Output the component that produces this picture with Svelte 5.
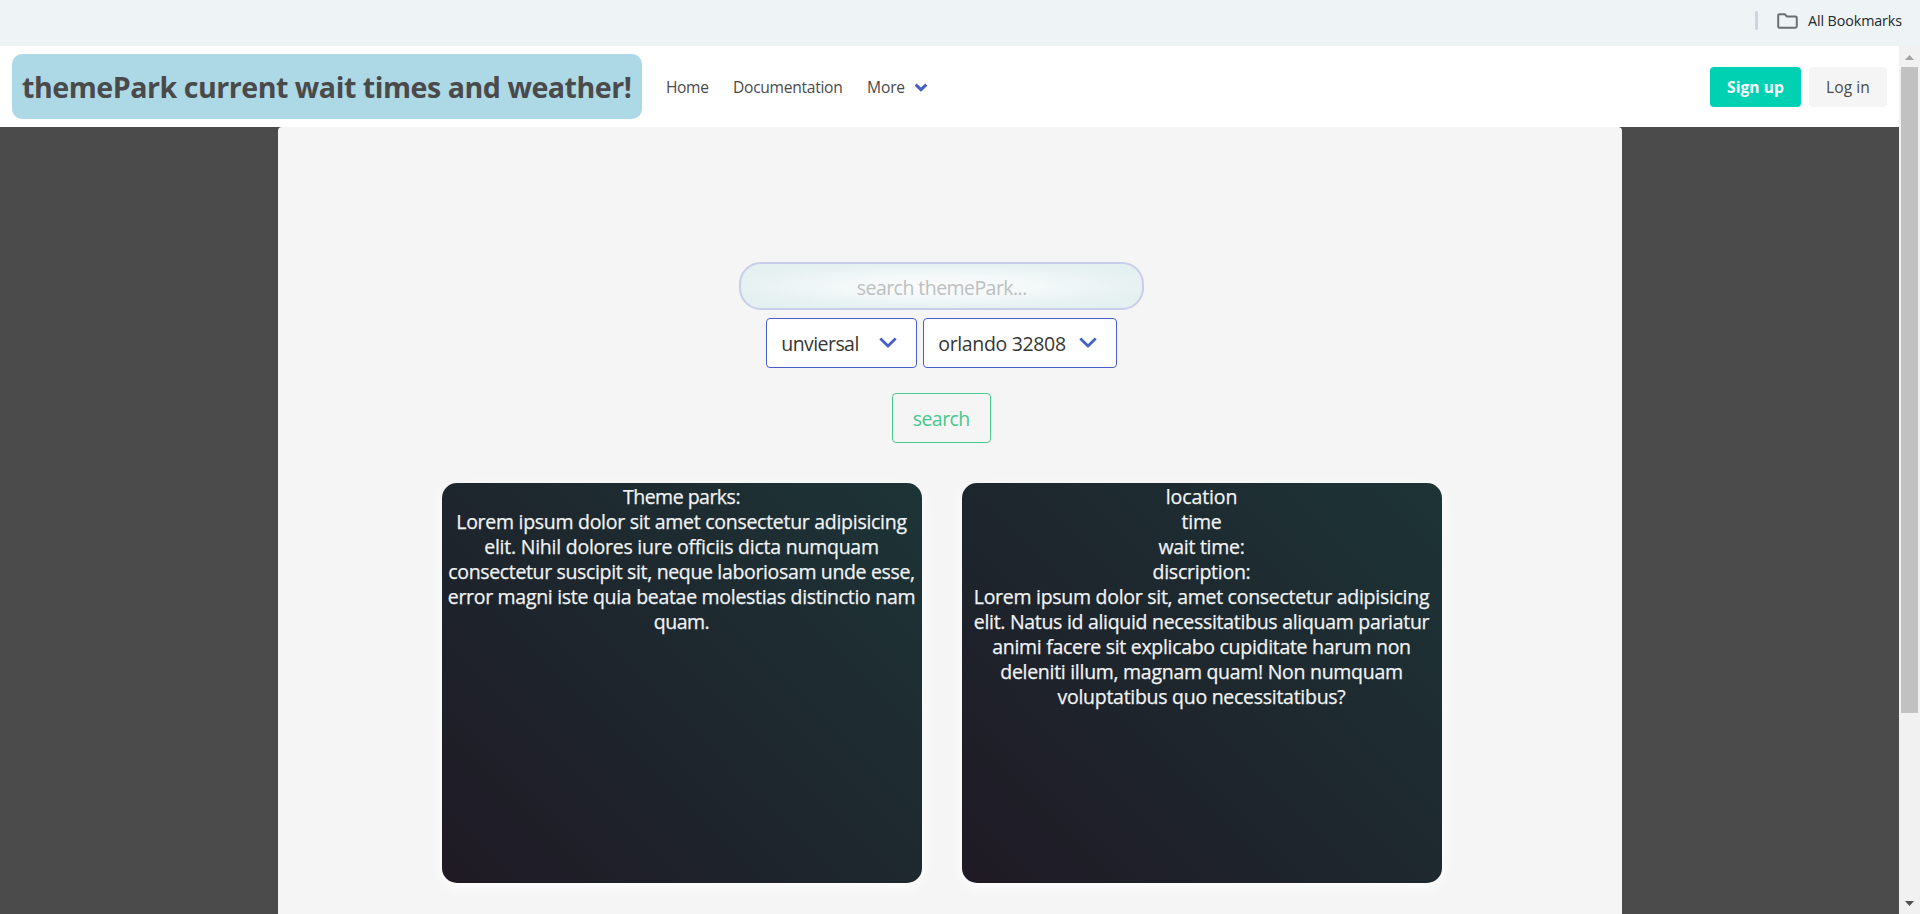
<script>
  const links = [
    { text: 'Home', width: 42.5 },
    { text: 'Documentation', width: 109.5 },
    { text: 'More', width: 38 }
  ];

  const selects = [
    { text: 'unviersal', width: 77.5, box: 151 },
    { text: 'orlando 32808', width: 127.5, box: 194 }
  ];

  const cards = [
    [
      ['Theme parks:', 117],
      ['Lorem ipsum dolor sit amet consectetur adipisicing', 450.5],
      ['elit. Nihil dolores iure officiis dicta numquam', 394.5],
      ['consectetur suscipit sit, neque laboriosam unde esse,', 466.5],
      ['error magni iste quia beatae molestias distinctio nam', 467.5],
      ['quam.', 55.5]
    ],
    [
      ['location', 71.5],
      ['time', 40],
      ['wait time:', 86],
      ['discription:', 98],
      ['Lorem ipsum dolor sit, amet consectetur adipisicing', 455.5],
      ['elit. Natus id aliquid necessitatibus aliquam pariatur', 455.5],
      ['animi facere sit explicabo cupiditate harum non', 418.5],
      ['deleniti illum, magnam quam! Non numquam', 402.5],
      ['voluptatibus quo necessitatibus?', 288]
    ]
  ];

  // Tracks a line of text so that it fills the given measure.
  function fit(node, width) {
    const natural = node.getBoundingClientRect().width;
    const count = node.textContent.length;
    const gap = (width - natural) / count;
    node.style.letterSpacing = `${gap}px`;
  }
</script>

<div class="window">
  <div class="bookmarks">
    <span class="divider"></span>
    <svg class="folder" width="21" height="16" viewBox="0 0 21 16">
      <path d="M2.6 1.2h5.2l2.2 2.3h8.4q1.4 0 1.4 1.4v8.4q0 1.4-1.4 1.4H2.6q-1.4 0-1.4-1.4V2.6q0-1.4 1.4-1.4z" fill="none" stroke="#6b6e72" stroke-width="2" />
    </svg>
    <span class="all" use:fit={94}>All Bookmarks</span>
  </div>

  <div class="view">
    <div class="page">
      <nav>
        <div class="brand"><span use:fit={609.5}>themePark current wait times and weather!</span></div>
        <div class="links">
          {#each links as link}
            <a><span use:fit={link.width}>{link.text}</span></a>
          {/each}
          <svg class="small-arrow" width="14" height="9" viewBox="0 0 14 9">
            <path d="M1.7 1.7 7 6.7l5.3-5" fill="none" stroke="#485fc7" stroke-width="3" />
          </svg>
        </div>
        <div class="actions">
          <button class="signup"><span use:fit={57}>Sign up</span></button>
          <button class="login"><span use:fit={44}>Log in</span></button>
        </div>
      </nav>

      <main>
        <div class="search-box"><span use:fit={170}>search themePark...</span></div>
        <div class="selects">
          {#each selects as s}
            <div class="select" style="width: {s.box}px">
              <span use:fit={s.width}>{s.text}</span>
              <svg width="18" height="12" viewBox="0 0 18 12">
                <path d="M1.3 1.5 9 9l7.7-7.5" fill="none" stroke="#485fc7" stroke-width="2.8" />
              </svg>
            </div>
          {/each}
        </div>
        <button class="go"><span use:fit={57}>search</span></button>
        <div class="cards">
          {#each cards as lines}
            <section>
              {#each lines as [text, width]}
                <p><span use:fit={width}>{text}</span></p>
              {/each}
            </section>
          {/each}
        </div>
      </main>
    </div>

    <div class="scrollbar">
      <svg width="21" height="21" viewBox="0 0 21 21"><path d="M6 14h9L10.5 9z" fill="#a3a3a3" /></svg>
      <div class="track"><div class="thumb"></div></div>
      <svg width="21" height="21" viewBox="0 0 21 21"><path d="M6 8h9l-4.500 5z" fill="#505050" /></svg>
    </div>
  </div>
</div>

<style>
  :global(body) {
    overflow: hidden;
  }
  .window,
  .window * {
    box-sizing: border-box;
  }
  .window {
    width: 1920px;
    height: 914px;
    overflow: hidden;
    display: flex;
    flex-direction: column;
    font-family: 'Open Sans', 'Noto Sans', sans-serif;
    font-size: 15.6px;
    color: #4a4a4a;
  }
  span {
    white-space: nowrap;
  }
  button {
    font: inherit;
    padding: 0;
    border: 0;
    border-radius: 4px;
    display: flex;
    align-items: center;
    justify-content: center;
  }
  .bookmarks {
    height: 46px;
    flex: none;
    background: #eef3f6;
    display: flex;
    justify-content: flex-end;
    align-items: center;
    padding: 0 18px 5px 0;
  }
  .divider {
    width: 3px;
    height: 19px;
    border-radius: 2px;
    background: #cdd4e0;
    margin-right: 19px;
  }
  .folder {
    margin-right: 10px;
  }
  .all {
    font-size: 14.3px;
    color: #24272b;
  }
  .view {
    flex: 1;
    display: flex;
    min-height: 0;
  }
  .page {
    width: 1899px;
    background: #4b4b4b;
    display: flex;
    flex-direction: column;
    align-items: center;
  }
  nav {
    width: 100%;
    height: 81px;
    flex: none;
    background: #fff;
    display: flex;
    align-items: center;
    padding: 0 12px;
  }
  .brand {
    width: 630px;
    height: 65px;
    border-radius: 10px;
    background: #add8e6;
    display: flex;
    align-items: center;
    padding: 0 0 0 10px;
    font-size: 28.6px;
    font-weight: 700;
  }
  .links {
    display: flex;
    align-items: center;
    gap: 24.5px;
    padding-left: 24px;
  }
  .small-arrow {
    margin: 2px 0 0 -15.5px;
  }
  .actions {
    margin-left: auto;
    display: flex;
    gap: 8px;
  }
  .actions button {
    height: 40px;
  }
  .signup {
    width: 91px;
    background: #00d1b2;
    color: #fff;
    font-weight: 700;
  }
  .login {
    width: 78px;
    background: #f5f5f5;
    color: #4a4a4a;
  }
  main {
    width: 1344px;
    flex: 1;
    background: #f5f5f5;
    border-radius: 4px 4px 0 0;
    display: flex;
    flex-direction: column;
    align-items: center;
    padding: 135px 16.5px 0 0;
    font-size: 19.5px;
  }
  .search-box {
    width: 405px;
    height: 48px;
    flex: none;
    margin-left: 1px;
    border: 2px solid #c8cde9;
    border-radius: 22px;
    background: radial-gradient(ellipse farthest-corner, #fbfcfc 0%, #f3f8f8 35%, #e5f0f1 75%, #e3eff0 100%);
    display: flex;
    align-items: center;
    justify-content: center;
    padding-top: 3px;
    color: #bcc0c1;
  }
  .selects {
    display: flex;
    gap: 6px;
    margin-top: 8px;
  }
  .select {
    height: 50px;
    display: flex;
    align-items: center;
    justify-content: space-between;
    padding: 0 18.5px 0 14.5px;
    border: 1px solid #485fc7;
    border-radius: 4px;
    background: #fff;
    color: #363636;
  }
  .go {
    width: 99px;
    height: 50px;
    flex: none;
    margin-top: 25px;
    border: 1px solid #48c78e;
    background: transparent;
    color: #48c78e;
  }
  .cards {
    display: flex;
    gap: 40px;
    margin: 40px 0 0 1.5px;
  }
  section {
    width: 480px;
    height: 400px;
    padding: 1px 1px 0 0;
    border-radius: 15px;
    background: linear-gradient(45deg, #1f1a24, #1e272e 50%, #1d3437);
    box-shadow: 0 4px 14px rgba(255, 255, 255, 0.9);
    color: #f1f3f4;
    -webkit-text-stroke: 0.25px #f1f3f4;
    text-align: center;
  }
  p {
    margin: 0;
    height: 25px;
    line-height: 25px;
  }
  .scrollbar {
    width: 21px;
    background: #f1f1f1;
    display: flex;
    flex-direction: column;
    align-items: center;
  }
  .track {
    flex: 1;
    width: 17px;
  }
  .thumb {
    height: 646px;
    background: #c1c1c1;
  }
</style>
